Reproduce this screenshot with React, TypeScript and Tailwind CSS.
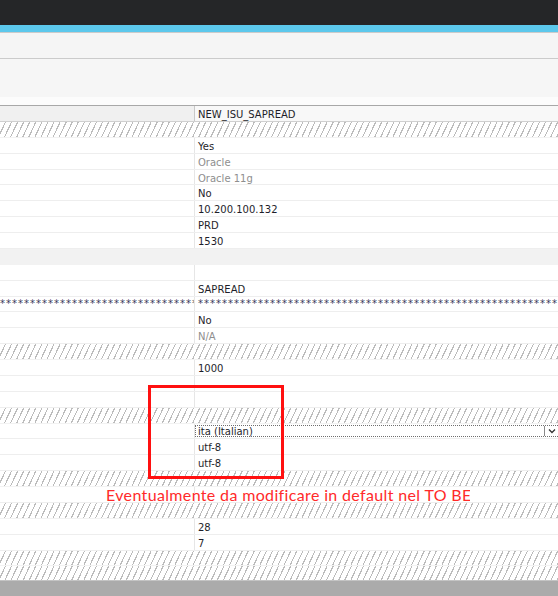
import React from "react";

type Row =
  | { t: "header"; v: string }
  | { t: "hatch" }
  | { t: "text"; v: string; gray?: boolean }
  | { t: "gray" }
  | { t: "blank" }
  | { t: "pwd" }
  | { t: "combo"; v: string };

const rows: Row[] = [
  { t: "header", v: "NEW_ISU_SAPREAD" },
  { t: "hatch" },
  { t: "text", v: "Yes" },
  { t: "text", v: "Oracle", gray: true },
  { t: "text", v: "Oracle 11g", gray: true },
  { t: "text", v: "No" },
  { t: "text", v: "10.200.100.132" },
  { t: "text", v: "PRD" },
  { t: "text", v: "1530" },
  { t: "gray" },
  { t: "blank" },
  { t: "text", v: "SAPREAD" },
  { t: "pwd" },
  { t: "text", v: "No" },
  { t: "text", v: "N/A", gray: true },
  { t: "hatch" },
  { t: "text", v: "1000" },
  { t: "blank" },
  { t: "blank" },
  { t: "hatch" },
  { t: "combo", v: "ita (Italian)" },
  { t: "text", v: "utf-8" },
  { t: "text", v: "utf-8" },
  { t: "hatch" },
  { t: "blank" },
  { t: "hatch" },
  { t: "text", v: "28" },
  { t: "text", v: "7" },
  { t: "hatch" },
  { t: "hatch" },
];

const hatch =
  "bg-[image:repeating-linear-gradient(115deg,#ffffff_0px,#ffffff_4.4px,#bcbcbc_4.4px,#bcbcbc_5.5px)]";

const stars = "*".repeat(80);

function GridRow({ r }: { r: Row }) {
  if (r.t === "hatch") {
    return <div className={`h-[15.875px] shrink-0 ${hatch} border-b border-[#f2f2f2]`} />;
  }
  if (r.t === "header") {
    return (
      <div className="h-[15.875px] shrink-0 flex border-b border-[#d0d0d0]">
        <div className="w-[195px] shrink-0 bg-[#f0f0f0] border-r border-[#c8c8c8]" />
        <div className="flex-1 bg-[#f8f8f8] flex items-start pt-[4px] pl-[3px] text-[#1e1e2a]">{r.v}</div>
      </div>
    );
  }
  if (r.t === "gray") {
    return <div className="h-[15.875px] shrink-0 bg-[#f2f2f2]" />;
  }
  if (r.t === "pwd") {
    return (
      <div className="h-[15.875px] shrink-0 flex border-b border-[#eeeeee] overflow-hidden text-[#3a3a5a]">
        <div className="w-[195px] shrink-0 overflow-hidden whitespace-nowrap border-r border-[#e6e6e6] flex items-start pt-[2px] tracking-[1px]">
          {stars}
        </div>
        <div className="flex-1 overflow-hidden whitespace-nowrap pl-[3px] flex items-start pt-[2px] tracking-[1px]">
          {stars}
        </div>
      </div>
    );
  }
  if (r.t === "combo") {
    return (
      <div className="h-[15.875px] shrink-0 flex border-b border-[#eeeeee]">
        <div className="w-[195px] shrink-0 border-r border-[#e6e6e6]" />
        <div className="flex-1 relative">
          <div className="absolute left-0 right-[-2px] top-[1px] bottom-[1px] border border-dotted border-[#6e6e6e] flex items-center pl-[2px] text-[#1e1e2a]">
            <span className="flex-1 pt-[2px]">{r.v}</span>
            <div className="w-[15px] h-full border-l border-[#8a8a8a] flex items-center justify-center">
              <svg width="8" height="6" viewBox="0 0 8 6">
                <polyline points="1,1.5 4,4.5 7,1.5" fill="none" stroke="#333" strokeWidth="1.3" />
              </svg>
            </div>
          </div>
        </div>
      </div>
    );
  }
  return (
    <div className="h-[15.875px] shrink-0 flex border-b border-[#eeeeee]">
      <div className="w-[195px] shrink-0 border-r border-[#e6e6e6]" />
      <div
        className={`flex-1 flex items-start pt-[4px] pl-[3px] ${
          r.t === "text" && r.gray ? "text-[#8e8e8e]" : "text-[#1e1e2a]"
        }`}
      >
        {r.t === "text" ? r.v : ""}
      </div>
    </div>
  );
}

export default function App() {
  return (
    <div className="w-[558px] h-[596px] overflow-hidden relative bg-white flex flex-col font-['DejaVu_Sans',sans-serif] text-[10px] leading-[10px]">
      <div className="h-[25px] shrink-0 bg-[#252628]" />
      <div className="h-[7px] shrink-0 bg-[#5cc8ec]" />
      <div className="h-[27px] shrink-0 bg-[#f5f5f5] border-t border-b border-[#cbcbcb]" />
      <div className="h-[38px] shrink-0 bg-[#f6f6f6]" />
      <div className="h-[9px] shrink-0 bg-[#fcfcfc] border-b border-[#a8a8a8]" />
      <div className="h-[474px] shrink-0 flex flex-col overflow-hidden">
        {rows.map((r, i) => (
          <GridRow key={i} r={r} />
        ))}
      </div>
      <div className="flex-1 bg-[#ababab] border-t border-[#c4c4c4]" />

      <div className="absolute left-[148px] top-[385px] w-[136px] h-[94px] border-[3px] border-[#ff1010]" />
      <div className="absolute left-[106px] top-[486px] w-[364px] h-[18px] overflow-hidden whitespace-nowrap font-['Lato',sans-serif] text-[16px] leading-[18px] tracking-[0.35px] text-[#ff2a2a]">
        Eventualmente da modificare in default nel TO BE
      </div>
    </div>
  );
}
